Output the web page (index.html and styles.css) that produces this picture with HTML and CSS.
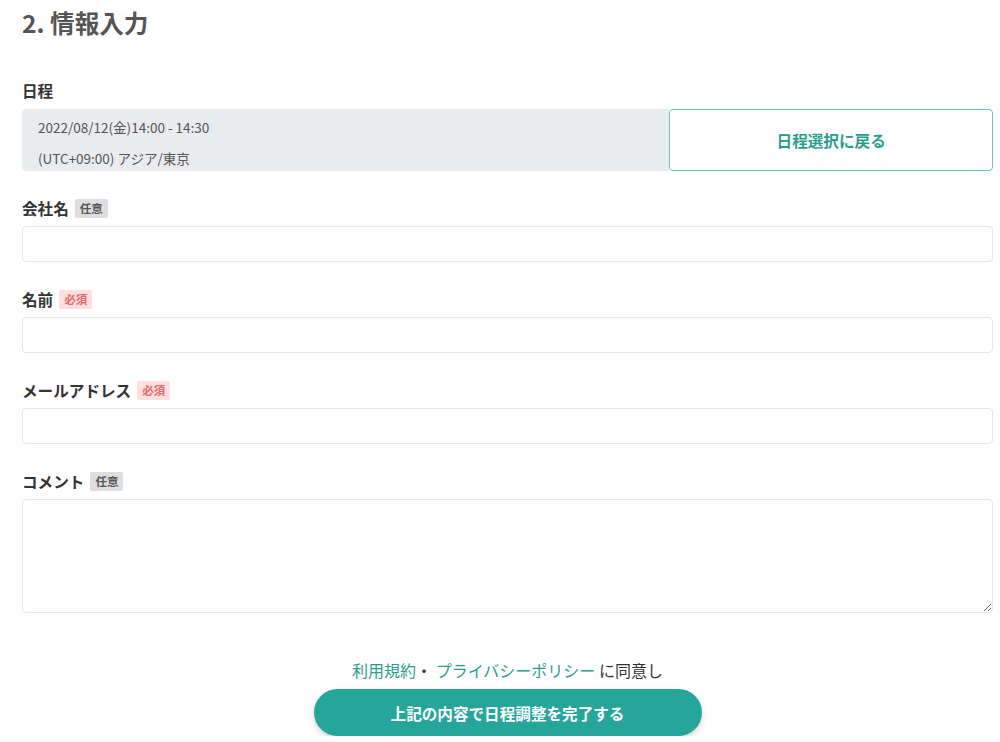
FILE: index.html
```html
<!DOCTYPE html>
<html lang="ja">
<head>
<meta charset="utf-8">
<link rel="stylesheet" href="styles.css">
</head>
<body>
<div class="page">
  <h2 class="title">2. 情報入力</h2>

  <div class="field field-schedule">
    <div class="label">日程</div>
    <div class="schedule-row">
      <div class="schedule-box">
        <p class="line1">2022/08/12(金)14:00 - 14:30</p>
        <p class="line2">(UTC+09:00) アジア/東京</p>
      </div>
      <button class="back-btn">日程選択に戻る</button>
    </div>
  </div>

  <div class="field">
    <div class="label">会社名<span class="tag tag-opt">任意</span></div>
    <input class="input" type="text">
  </div>

  <div class="field">
    <div class="label">名前<span class="tag tag-req">必須</span></div>
    <input class="input" type="text">
  </div>

  <div class="field">
    <div class="label">メールアドレス<span class="tag tag-req">必須</span></div>
    <input class="input" type="text">
  </div>

  <div class="field">
    <div class="label">コメント<span class="tag tag-opt">任意</span></div>
    <textarea class="textarea"></textarea>
  </div>

  <div class="agree">
    <p class="agree-text"><a class="link">利用規約</a>・ <a class="link">プライバシーポリシー</a> に同意し</p>
    <button class="submit">上記の内容で日程調整を完了する</button>
  </div>
</div>
</body>
</html>
```

FILE: styles.css
```css
* { box-sizing: border-box; }
html, body {
  margin: 0;
  padding: 0;
  background: #ffffff;
}
body {
  font-family: "Noto Sans CJK JP", "Noto Sans", sans-serif;
  color: #333;
}
.page {
  padding: 0 7px 0 22px;
}
.title {
  margin: 4px 0 0;
  font-size: 24.6px;
  line-height: 36px;
  font-weight: 700;
  color: #555;
}
.field {
  margin-bottom: 25px;
  display: flex;
  flex-direction: column;
}
.field-schedule {
  margin-top: 38px;
}
.label {
  font-size: 15.6px;
  line-height: 24px;
  font-weight: 700;
  color: #333;
  margin-bottom: 6px;
  display: flex;
  align-items: center;
}
.field-schedule .label {
  margin-bottom: 7px;
}
.tag {
  margin-left: 6px;
  font-size: 11.5px;
  line-height: 19px;
  padding: 0 5px;
  border-radius: 2px;
  font-weight: 700;
}
.tag-opt {
  background: #dedede;
  color: #555;
}
.tag-req {
  background: #ffdfdf;
  color: #e26a6a;
}
.schedule-row {
  display: grid;
  grid-template-columns: 2fr 1fr;
  height: 62px;
}
.schedule-box {
  background: #e9ecef;
  border-radius: 4px 0 0 4px;
  padding: 8px 16px 0;
  font-size: 13.5px;
  color: #555;
}
.schedule-box p {
  margin: 0;
  line-height: 20px;
}
.schedule-box .line2 {
  margin-top: 11px;
}
.back-btn {
  font-family: inherit;
  background: #fff;
  border: 1px solid #6cc3b7;
  border-radius: 4px;
  color: #2a9d8f;
  font-size: 15.6px;
  font-weight: 700;
  cursor: pointer;
}
.input {
  height: 36px;
  border: 1px solid #e6e6e6;
  border-radius: 4px;
  background: #fff;
  font-family: inherit;
  width: 100%;
}
.textarea {
  height: 114px;
  border: 1px solid #e6e6e6;
  border-radius: 4px;
  background: #fff;
  font-family: inherit;
  width: 100%;
  resize: vertical;
  margin: 0;
  display: block;
}
.agree {
  margin-top: 45px;
  display: flex;
  flex-direction: column;
  align-items: center;
}
.agree-text {
  margin: 0 0 7px;
  font-size: 16px;
  line-height: 24px;
  color: #333;
}
.link {
  color: #2a9d8f;
  text-decoration: none;
}
.submit {
  width: 388px;
  height: 47px;
  border: none;
  border-radius: 24px;
  background: #26a69a;
  color: #fff;
  font-family: inherit;
  font-size: 15.6px;
  font-weight: 700;
  box-shadow: 0 3px 6px rgba(0,0,0,0.18);
  cursor: pointer;
}
```
